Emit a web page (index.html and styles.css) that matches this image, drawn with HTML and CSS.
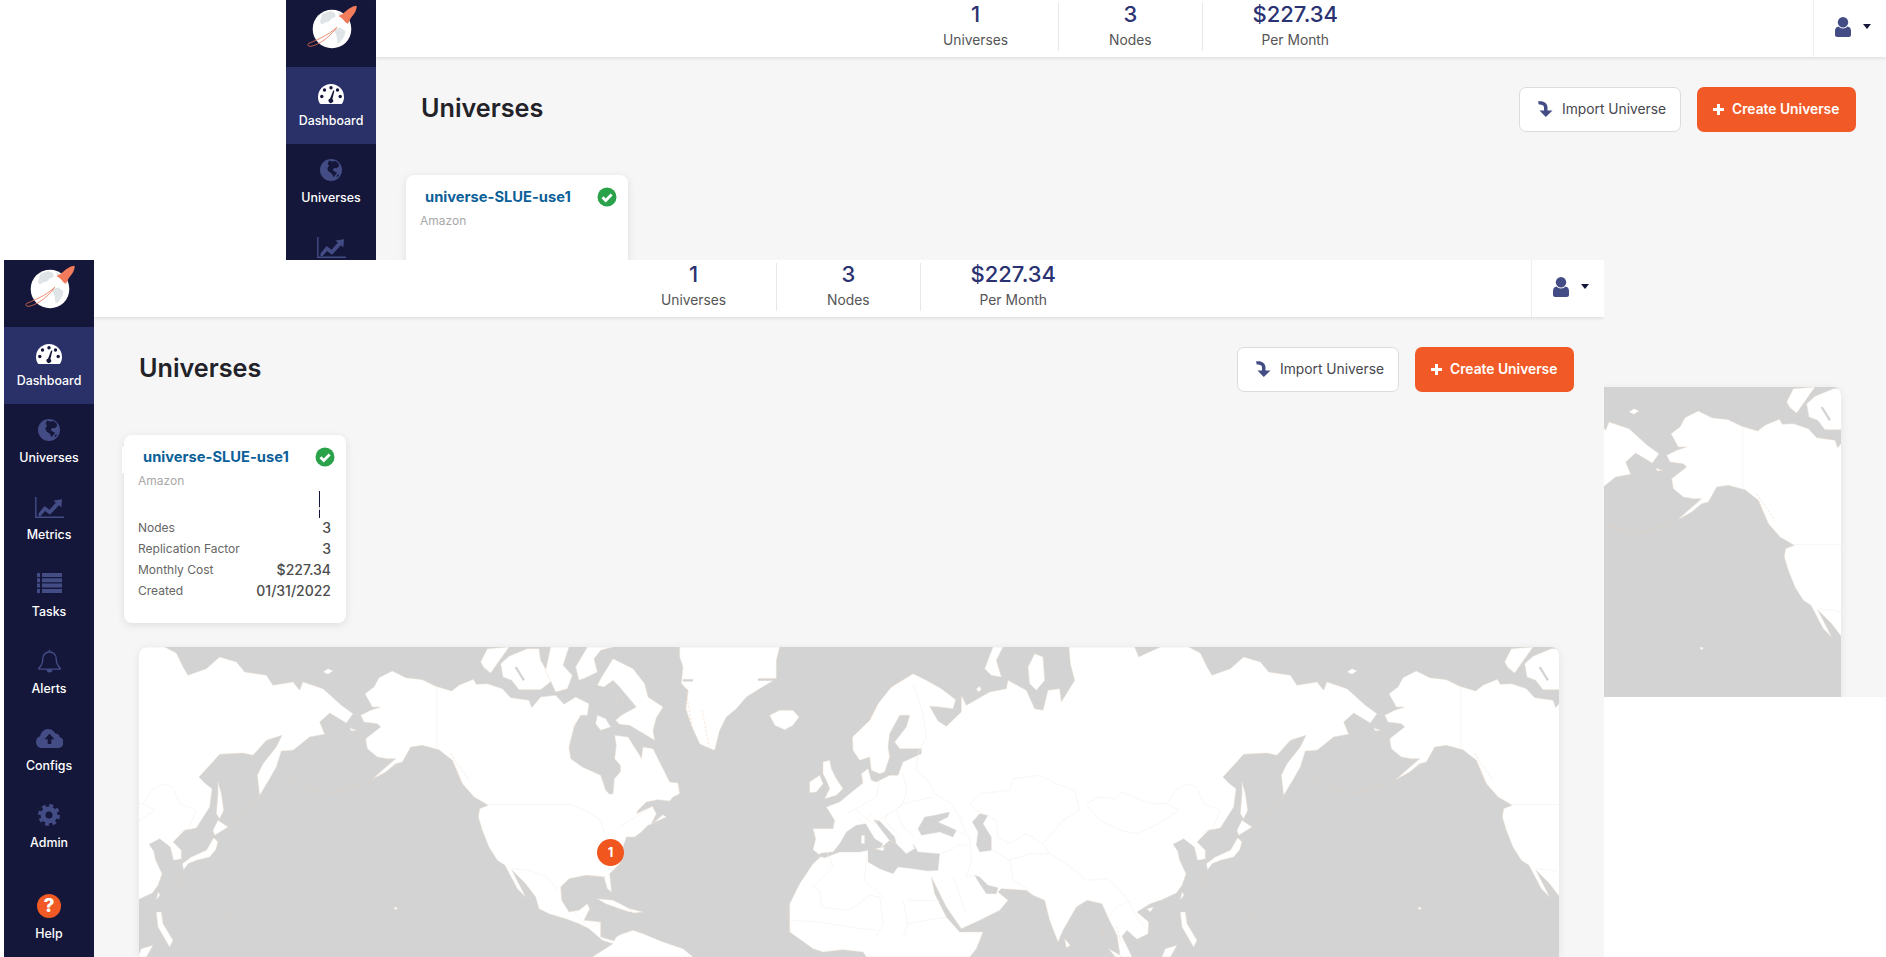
FILE: index.html
```html
<!DOCTYPE html>
<html lang="en">
<head>
<meta charset="utf-8">
<title>Universes</title>
<link rel="stylesheet" href="styles.css">
</head>
<body>
<svg class="sprite" aria-hidden="true">
  <defs>
    <g id="world">
      <!-- North America -->
      <path class="land" d="M678,140 705,120 720,92 760,72 800,92 850,98 890,118 938,132 960,115 1003,97 1012,112 1045,110 1090,125 1115,152 1170,160 1178,182 1205,150 1250,145 1275,172 1310,150 1350,170 1345,205 1325,205 1305,240 1290,300 1295,335 1330,360 1385,385 1400,430 1412,442 1422,440 1426,395 1444,375 1444,355 1427,335 1432,295 1427,265 1467,270 1502,325 1507,335 1512,300 1542,305 1572,365 1592,405 1617,408 1622,440 1602,450 1592,462 1557,458 1522,465 1497,490 1492,500 1540,478 1552,500 1537,530 1582,510 1572,503 1540,530 1527,535 1507,555 1487,570 1462,570 1452,600 1442,650 1412,680 1418,735 1405,725 1395,690 1340,685 1290,695 1265,720 1268,760 1290,795 1320,790 1345,770 1352,785 1335,820 1385,825 1385,870 1425,882 1432,870 1447,862 1482,850 1512,860 1572,885 1632,905 1662,930 1360,930 1422,890 1390,880 1350,845 1320,830 1280,815 1230,800 1200,785 1190,750 1160,710 1118,668 1160,750 1135,725 1098,655 1075,640 1050,600 1030,550 1018,510 1022,485 1048,475 1005,450 970,410 940,340 900,308 850,295 815,300 790,345 770,350 740,375 700,397 730,370 770,335 745,335 715,330 685,305 680,275 725,240 715,230 675,225 665,205 695,190 725,180 700,180z"/>
      <!-- Arctic Canada -->
      <path class="land" d="M1025,45 1045,5 1110,0 1085,35 1055,78 1035,62z"/>
      <path class="land" d="M1085,50 1110,28 1165,5 1200,5 1205,40 1225,75 1240,100 1205,128 1140,128 1118,100 1092,90z"/>
      <path class="land" d="M1235,0 1290,0 1272,55 1300,85 1285,125 1250,135 1220,70z"/>
      <path class="land" d="M1310,60 1345,0 1422,0 1385,10 1365,35 1375,75 1345,90 1320,100z"/>
      <path class="land" d="M1422,35 1452,50 1482,65 1517,110 1527,150 1572,180 1552,212 1542,250 1547,280 1522,265 1472,235 1442,232 1430,220 1447,205 1492,180 1442,120 1422,100 1395,120 1375,115 1385,95z"/>
      <path class="land" d="M1375,205 1400,215 1415,240 1385,250 1370,230z"/>
      <ellipse class="sea" cx="1442" cy="160" rx="10" ry="14"/>
      <path class="strait" d="M1130,60 1155,100M1345,130 1400,150 1425,170M1430,255 1470,240"/>
      <!-- Caribbean -->
      <path class="land" d="M1375,755 1422,760 1452,775 1490,795 1472,795 1442,785 1400,770z"/>
      <path class="land" d="M1472,785 1512,795 1482,798z"/>
      <!-- Hawaii -->
      <path class="land" d="M765,780 775,782 772,788 766,786z"/>
      <g transform="translate(1422 0)">
        <!-- Greenland, Iceland, Britain -->
        <path class="land" d="M200,0 500,0 490,40 490,95 440,125 400,150 370,185 340,210 320,250 305,310 280,300 260,290 235,235 218,185 225,130 205,110 210,60 200,30z"/>
        <path class="strait" d="M435,98 490,98M210,100 240,100"/>
        <path class="land" d="M470,205 500,190 540,190 558,210 540,235 515,248 485,235z"/>
        <path class="land" d="M630,345 650,340 655,365 670,395 690,425 670,445 635,455 650,425 640,400 630,380z"/>
        <path class="land" d="M590,405 620,385 630,410 610,435 590,437z"/>
        <!-- Afro-Eurasia -->
        <path class="land" d="M600,608 608,575 600,545 660,545 665,520 640,480 680,465 710,440 750,408 745,380 765,365 775,400 790,405 830,385 855,385 870,345 925,320 925,305 860,305 845,285 880,240 890,205 860,205 830,260 825,300 830,330 815,375 800,380 775,370 770,330 740,340 720,310 718,270 770,220 795,170 835,120 900,80 940,100 985,125 1028,158 1020,185 980,180 950,178 975,222 1000,238 1045,195 1045,145 1060,175 1095,155 1130,135 1180,125 1185,100 1240,130 1265,185 1290,190 1305,130 1340,125 1345,165 1385,100 1372,50 1368,0 1565,0 1577,30 1642,0 1727,0 1762,18 1782,60 1797,85 1852,65 1892,30 1942,45 1967,75 2032,85 2052,115 2112,105 2132,130 2142,105 2202,125 2257,175 2292,200 2272,228 2222,198 2192,225 2207,262 2162,270 2112,310 2077,312 2062,360 2042,395 2012,445 2005,385 2022,350 2062,300 2079,265 2032,280 1992,325 1962,318 1892,322 1830,390 1847,408 1869,425 1862,480 1822,543 1787,550 1752,585 1777,610 1777,635 1754,640 1744,600 1712,575 1680,592 1694,612 1700,640 1719,680 1707,715 1690,738 1647,758 1612,770 1572,795 1607,825 1605,860 1572,877 1542,850 1527,868 1557,930 1522,930 1512,865 1487,815 1467,770 1422,760 1390,780 1350,850 1335,885 1310,820 1295,760 1260,745 1240,730 1165,725 1155,735 1185,760 1160,790 1100,820 1045,845 1000,780 955,690 965,740 1000,810 1040,855 1110,855 1090,905 1070,930 760,930 750,915 690,908 630,915 600,905 565,880 530,855 530,770 560,710 600,650 625,628z"/>
        <!-- Inland seas -->
        <path class="sea" d="M612,626 625,618 660,615 680,590 700,555 730,535 758,530 785,575 810,590 800,607 830,580 850,590 880,620 905,605 900,590 915,615 980,620 975,670 945,672 900,665 855,660 840,680 800,665 765,645 765,610 740,615 680,615 635,632z"/>
        <path class="sea" d="M782,518 800,522 845,570 850,590 828,578z"/>
        <path class="sea" d="M915,545 935,510 965,505 1010,495 1005,510 975,525 1030,550 1020,570 980,555 950,560 925,565z"/>
        <path class="sea" d="M1078,525 1100,500 1125,505 1110,530 1135,570 1135,610 1100,615 1090,595 1095,555z"/>
        <path class="sea" d="M1085,685 1100,690 1125,715 1155,722 1150,740 1120,740 1100,710z"/>
        <path class="land" d="M745,565 755,565 755,590 745,590z"/>
        <path class="land" d="M787,605 815,600 810,612z"/>
        <path class="land" d="M1355,875 1372,895 1360,902z"/>
        <!-- Arctic Russia islands -->
        <path class="land" d="M1115,65 1140,0 1170,0 1150,40 1165,90 1135,85z"/>
        <path class="land" d="M1245,60 1265,20 1290,30 1295,100 1270,130 1250,110z"/>
        <path class="land" d="M1090,125 1100,118 1105,128 1095,135z"/>
      </g>
      <g transform="translate(2844 0)">
        <path class="land" d="M780,75 795,65 810,72 795,82z"/>
        <path class="land" d="M860,243 880,250 865,252z"/>
        <path class="land" d="M465,405 475,440 482,490 470,515 460,500 465,440z"/>
        <path class="land" d="M450,550 465,520 495,540 455,565z"/>
        <path class="land" d="M452,572 465,585 458,608 440,630 400,640 375,650 362,668 358,650 385,630 430,610z"/>
        <path class="land" d="M285,735 291,745 280,758z"/>
        <path class="land" d="M180,785 200,780 190,795z"/>
        <path class="land" d="M280,795 295,795 300,830 330,880 320,900 285,840z"/>
        <path class="land" d="M235,905 270,895 250,930 225,930z"/>
        <path class="land" d="M65,905 100,925 105,930 85,930z"/>
        <path class="coast" d="M670,385 730,420 790,438 840,432 900,410 960,380M590,450 540,505 490,545M360,680 340,720 300,740M495,790 490,830M43,840 50,870M90,840 100,880"/>
      </g>
      <!-- Borders -->
      <path class="border" d="M893,120V308M1048,472H1290L1340,490 1385,520 1395,555M1120,665 1170,670 1225,690 1255,730M1540,478 1490,510 1440,540M1300,790 1340,830M1360,840 1385,825"/>
      <path class="coast" d="M940,340 970,410 1005,450M935,320 990,400M1400,690 1340,685M1300,240 1325,210M1640,130 1660,240M1690,190 1710,300"/>
      <g transform="translate(1422 0)">
        <path class="border" d="M900,110 930,200 940,270 915,320 910,370 945,400 965,440 1015,470 1040,510 1060,560M800,400 790,450 740,480 700,500M730,490 780,530 830,500 870,470 960,450M870,380 880,430 870,470 850,490 870,540 905,570M825,500 815,520 860,570M735,510 750,530 775,500M1030,550 1070,570 1075,640 1060,690 1085,685M985,620 1050,590 1070,600M1070,470 1100,440 1190,430 1200,395 1280,385 1330,410 1385,430 1400,490 1350,520 1290,590 1310,620 1360,650 1420,700M1070,470 1090,490 1150,520 1155,570 1190,590 1240,560 1290,590M1190,635 1200,700 1250,730M1140,610 1190,640 1250,620 1310,620M600,720 620,730 625,780 710,790 770,745 800,750 810,830 790,870M530,820 620,825 710,840 790,850M640,610 660,660 600,720M760,625 755,700 810,750M870,760 885,830 870,870M885,760 980,760M1020,690 1060,800M885,830 1000,810"/>
        <path class="coast" d="M835,120 900,80M718,270 770,220 795,170M225,130 218,185 235,235M440,95 490,95M520,770 530,855"/>
      </g>
      <g transform="translate(2844 0)">
        <path class="border" d="M0,470 30,450 85,455 105,435 150,455 195,470 240,470 270,425 300,412 330,420 350,470 400,490 380,540 345,560M0,475 40,520 100,550 150,560 215,530 275,490 240,470M0,700 60,695 90,720 130,770 150,810 175,845M60,815 90,780 130,760"/>
      </g>
    </g>
    <symbol id="i-gauge" viewBox="0 0 26 20"><path class="i-white" d="M13 0A13 13 0 0 0 0 13c0 2.400.7 4.700 1.800 6.600.2.300.6.400 1 .4h20.400c.4 0 .8-.1 1-.4C25.300 17.700 26 15.400 26 13A13 13 0 0 0 13 0z"/><circle class="i-dark" cx="13" cy="3.700" r="1.700"/><circle class="i-dark" cx="6.500" cy="6" r="1.700"/><circle class="i-dark" cx="19.500" cy="6" r="1.700"/><circle class="i-dark" cx="3.800" cy="12.500" r="1.700"/><circle class="i-dark" cx="22.200" cy="12.500" r="1.700"/><path class="i-dark" d="M15.200 6.500l1.200.3-2 8.200a2.300 2.300 0 1 1-2.300-.5z"/></symbol>
    <symbol id="i-globe" viewBox="0 0 22 22"><circle class="i-blue" cx="11" cy="11" r="11"/><path class="i-dark" d="M9 1.500l3 1 3.500-.6 3 2.400.6 3-2.500 2-2.400-.4-1.600 2 2 1.600 2.500 1.200-2 2.600-1.500 2-1.300-2.800L11 14 8.500 12.500l-1.200-3 1.800-3-1.500-1.600zM17 16l2-1-.8 2.500-1.500.8z"/></symbol>
    <symbol id="i-chart" viewBox="0 0 29 21"><path class="i-stroke" d="M.8 0V20.200H29"/><path class="i-blue" d="M3.500 16.500l6-7.500 5 3.700 6.300-6.900-2.300-2.300L27 2.300l-.7 8.200-2.300-2.300-9 9.500-5-3.700-4.300 5H3.500z"/></symbol>
    <symbol id="i-tasks" viewBox="0 0 25 20"><path class="i-blue" d="M0 0h3v4H0zM5 0h20v4H5zM0 5.300h3v4H0zM5 5.300h20v4H5zM0 10.600h3v4H0zM5 10.600h20v4H5zM0 15.900h3v4H0zM5 15.900h20v4H5z"/></symbol>
    <symbol id="i-bell" viewBox="0 0 23 24"><path class="i-stroke" d="M11.500 3c4.500 0 6.800 3.300 6.800 7.500 0 5 2.100 7 3.900 8.800.3.400 0 .8-.4.800H1.200c-.4 0-.7-.4-.4-.8 1.800-1.800 3.900-3.800 3.900-8.800C4.700 6.300 7 3 11.500 3zM11.500 3V.8"/><path class="i-blue" d="M8.500 20.500h6a3 3 0 0 1-6 0z"/></symbol>
    <symbol id="i-cloud" viewBox="0 0 27 19"><path class="i-blue" d="M6 19a6 6 0 0 1-1.800-11.700A8 8 0 0 1 12 0c3.300 0 6 1.800 7.200 4.600A5.500 5.500 0 0 1 24 8.200a5.600 5.600 0 0 1-2.500 10.800z"/><path class="i-dark" d="M13.500 4.700l5 5.500H15.300V15h-3.600v-4.800H8.500z"/></symbol>
    <symbol id="i-gear" viewBox="0 0 22 22"><circle class="i-gear-ring" cx="11" cy="11" r="6"/><circle class="i-gear-teeth" cx="11" cy="11" r="9.300"/></symbol>
    <symbol id="i-user" viewBox="0 0 16 20"><circle class="i-blue" cx="8" cy="5.200" r="5.200"/><path class="i-blue" d="M3.500 9.600c1 1.300 2.700 1.900 4.500 1.900s3.500-.6 4.500-1.900c2 .4 3.500 1.800 3.500 4.300v3.800c0 1.300-1 2.300-2.300 2.300H2.300C1 20 0 19 0 17.700v-3.800c0-2.500 1.500-3.900 3.500-4.300z"/></symbol>
    <symbol id="i-import" viewBox="0 0 15 16"><path class="i-blue" d="M0 .5c4-.7 8.800.5 9.500 5.500v3.500H14.500L7.800 16 1.500 9.500H6V6.500C6 4 3.500 3.300.8 3.500z"/></symbol>
    <symbol id="i-check" viewBox="0 0 20 20"><circle class="i-green" cx="10" cy="10" r="9.500"/><path class="i-check" d="M5.500 10.200l3.200 3.200 5.900-6"/></symbol>
    <symbol id="i-logo" viewBox="0 0 60 46">
      <circle class="l-globe" cx="27" cy="24" r="19.300"/>
      <path class="l-land" d="M17 9l8-3 5 2 .5 4-4 1.500-2.500 3-4 1-3 2-2-2 1-4.500zM30 24l5-1.500 5.500 3.500-1 5-4.500 6.500-2.500.5-1-7.500-2-4zM33 7l3 1.500.5 2-3-1z"/>
      <path class="l-rocket" d="M33.500 11c2.500-1.500 4.500-2 7-4.500 3-2.800 6-5 10.500-5.800l.8.800c-.5 4-2 7-5 10.300-2 2.200-2.300 5-3.800 7-1.500-.5-2.500-1.300-4.500-3.800s-3.500-3-5-4z"/>
      <path class="l-ring" d="M32 22C23 31 8 36.500 4 38.300c-2 1-1.300 3 1 3 5 0 17-6 26-17.800"/>
    </symbol>
  </defs>
</svg>

<div class="desktop">
  <section class="window window-back">
    <nav class="sidebar">
      <div class="logo"><svg class="logo-svg"><use href="#i-logo"/></svg></div>
      <a class="nav-item active"><span class="nav-icon"><svg class="ic ic-gauge"><use href="#i-gauge"/></svg></span><span class="nav-label">Dashboard</span></a>
      <a class="nav-item"><span class="nav-icon"><svg class="ic ic-globe"><use href="#i-globe"/></svg></span><span class="nav-label">Universes</span></a>
      <a class="nav-item"><span class="nav-icon"><svg class="ic ic-chart"><use href="#i-chart"/></svg></span><span class="nav-label">Metrics</span></a>
    </nav>
    <div class="main">
      <header class="topbar">
        <div class="stats">
          <div class="stat"><div class="stat-num">1</div><div class="stat-label">Universes</div></div>
          <div class="stat"><div class="stat-num">3</div><div class="stat-label">Nodes</div></div>
          <div class="stat"><div class="stat-num">$227.34</div><div class="stat-label">Per Month</div></div>
        </div>
        <div class="profile"><svg class="ic ic-user"><use href="#i-user"/></svg><span class="caret"></span></div>
      </header>
      <div class="content">
        <div class="title-row">
          <h1 class="title">Universes</h1>
          <div class="actions">
            <button class="btn btn-import"><svg class="ic ic-import"><use href="#i-import"/></svg>Import Universe</button>
            <button class="btn btn-create"><span class="plus"></span>Create Universe</button>
          </div>
        </div>
        <div class="card">
          <div class="card-head"><a class="card-title">universe-SLUE-use1</a><svg class="ic ic-check"><use href="#i-check"/></svg></div>
          <div class="card-sub">Amazon</div>
        </div>
        <div class="map">
          <svg class="map-svg" viewBox="0 0 4260 930"><use href="#world"/><use href="#world" x="3072"/><use href="#world" x="-3072"/></svg>
        </div>
      </div>
    </div>
  </section>

  <section class="window window-front">
    <nav class="sidebar">
      <div class="logo"><svg class="logo-svg"><use href="#i-logo"/></svg></div>
      <a class="nav-item active"><span class="nav-icon"><svg class="ic ic-gauge"><use href="#i-gauge"/></svg></span><span class="nav-label">Dashboard</span></a>
      <a class="nav-item"><span class="nav-icon"><svg class="ic ic-globe"><use href="#i-globe"/></svg></span><span class="nav-label">Universes</span></a>
      <a class="nav-item"><span class="nav-icon"><svg class="ic ic-chart"><use href="#i-chart"/></svg></span><span class="nav-label">Metrics</span></a>
      <a class="nav-item"><span class="nav-icon"><svg class="ic ic-tasks"><use href="#i-tasks"/></svg></span><span class="nav-label">Tasks</span></a>
      <a class="nav-item"><span class="nav-icon"><svg class="ic ic-bell"><use href="#i-bell"/></svg></span><span class="nav-label">Alerts</span></a>
      <a class="nav-item"><span class="nav-icon"><svg class="ic ic-cloud"><use href="#i-cloud"/></svg></span><span class="nav-label">Configs</span></a>
      <a class="nav-item"><span class="nav-icon"><svg class="ic ic-gear"><use href="#i-gear"/></svg></span><span class="nav-label">Admin</span></a>
      <a class="nav-item nav-help"><span class="nav-icon"><span class="help-icon">?</span></span><span class="nav-label">Help</span></a>
    </nav>
    <div class="main">
      <header class="topbar">
        <div class="stats">
          <div class="stat"><div class="stat-num">1</div><div class="stat-label">Universes</div></div>
          <div class="stat"><div class="stat-num">3</div><div class="stat-label">Nodes</div></div>
          <div class="stat"><div class="stat-num">$227.34</div><div class="stat-label">Per Month</div></div>
        </div>
        <div class="profile"><svg class="ic ic-user"><use href="#i-user"/></svg><span class="caret"></span></div>
      </header>
      <div class="content">
        <div class="title-row">
          <h1 class="title">Universes</h1>
          <div class="actions">
            <button class="btn btn-import"><svg class="ic ic-import"><use href="#i-import"/></svg>Import Universe</button>
            <button class="btn btn-create"><span class="plus"></span>Create Universe</button>
          </div>
        </div>
        <div class="card">
          <span class="card-notch"></span>
          <span class="card-tick"></span>
          <div class="card-head"><a class="card-title">universe-SLUE-use1</a><svg class="ic ic-check"><use href="#i-check"/></svg></div>
          <div class="card-sub">Amazon</div>
          <dl class="card-rows">
            <div class="row"><dt>Nodes</dt><dd>3</dd></div>
            <div class="row"><dt>Replication Factor</dt><dd>3</dd></div>
            <div class="row"><dt>Monthly Cost</dt><dd>$227.34</dd></div>
            <div class="row"><dt>Created</dt><dd>01/31/2022</dd></div>
          </dl>
        </div>
        <div class="map">
          <svg class="map-svg" viewBox="0 0 4260 930"><use href="#world"/><use href="#world" x="3072"/><use href="#world" x="-3072"/></svg>
          <span class="marker">1</span>
        </div>
      </div>
    </div>
  </section>
</div>
</body>
</html>
```

FILE: styles.css
```css
* { box-sizing: border-box; }
html, body { margin: 0; padding: 0; background: #fff; }
body { font-family: Inter, "Noto Sans", sans-serif; color: #222; }
.sprite { position: absolute; width: 0; height: 0; }

.desktop { position: relative; width: 1886px; height: 957px; overflow: hidden; background: #fff; }
.window { position: absolute; width: 1600px; height: 697px; display: flex; background: #f6f6f6; overflow: hidden; }
.window-back { left: 286px; top: 0; }
.window-front { left: 4px; top: 260px; }

/* Sidebar */
.sidebar { width: 90px; flex: none; background: #15173a; display: flex; flex-direction: column; }
.logo { height: 67px; flex: none; display: flex; align-items: flex-start; padding: 5px 0 0 19px; }
.logo-svg { width: 60px; height: 46px; }
.nav-item { height: 77px; flex: none; display: flex; flex-direction: column; align-items: center; color: #fff; }
.nav-item.active { background: #2a3168; }
.nav-help { margin-top: auto; }
.nav-icon { height: 24px; margin-top: 14px; display: flex; align-items: center; justify-content: center; }
.nav-label { margin-top: 8px; font-size: 12.4px; line-height: 16px; font-weight: 500; color: #fff; }
.ic { display: block; flex: none; }
.ic-gauge { width: 26px; height: 20px; margin-top: 2px; }
.ic-globe { width: 22px; height: 22px; }
.ic-chart { width: 29px; height: 21px; }
.ic-tasks { width: 25px; height: 20px; margin-bottom: 2px; }
.ic-bell { width: 23px; height: 24px; }
.ic-cloud { width: 27px; height: 19px; }
.ic-gear { width: 22px; height: 22px; }
.ic-user { width: 16px; height: 20px; }
.ic-import { width: 15px; height: 16px; }
.ic-check { width: 20px; height: 20px; }
.help-icon { width: 24px; height: 24px; border-radius: 50%; background: #f15a24; color: #fff; font-size: 19px; font-weight: 800; line-height: 24px; text-align: center; }

.i-white { fill: #fff; }
.i-dark { fill: #15173a; }
.i-blue { fill: #434c85; }
.i-stroke { fill: none; stroke: #434c85; stroke-width: 1.4; }
.i-green { fill: #2aa24a; }
.i-check { fill: none; stroke: #fff; stroke-width: 2.8; }
.i-gear-ring { fill: none; stroke: #434c85; stroke-width: 5; }
.i-gear-teeth { fill: none; stroke: #434c85; stroke-width: 3.4; stroke-dasharray: 3.8 3.5; }
.l-globe { fill: #fff; }
.l-land { fill: #dfe5e7; }
.l-rocket { fill: #f27b5c; }
.l-ring { fill: none; stroke: #e8704f; stroke-width: .8; }

/* Main */
.main { flex: 1; min-width: 0; display: flex; flex-direction: column; }
.topbar { height: 57px; flex: none; background: #fff; box-shadow: 0 1px 4px rgba(0, 0, 0, .12); display: flex; padding-left: 517px; position: relative; z-index: 1; }
.stats { display: flex; padding-top: 3px; height: 51px; }
.stat { padding: 0 50px; text-align: center; border-right: 1px solid #e8e8e8; height: 48px; }
.stat:last-child { border-right: 0; }
.stat-num { font-size: 22px; line-height: 22px; font-weight: 500; color: #2b3272; }
.stat-label { margin-top: 6px; font-size: 13.8px; line-height: 18px; color: #555; white-space: nowrap; }
.profile { margin-left: auto; width: 73px; border-left: 1px solid #eee; display: flex; align-items: flex-start; padding: 17px 0 0 21px; position: relative; }
.caret { margin: 7px 0 0 12px; border-left: 4px solid transparent; border-right: 4px solid transparent; border-top: 5px solid #15173a; }

.content { flex: 1; position: relative; }
.title-row { display: flex; justify-content: space-between; align-items: center; height: 45px; margin: 30px 30px 0 45px; }
.title { margin: 0 0 4px; font-size: 25.2px; line-height: 30px; font-weight: 600; color: #222228; }
.actions { display: flex; gap: 16px; }
.btn { height: 45px; border-radius: 7px; font-family: inherit; font-size: 13.8px; display: flex; align-items: center; padding: 0 0 1px; }
.btn-import { width: 162px; background: #fff; border: 1px solid #dcdcdc; color: #46464e; padding-left: 18px; gap: 9px; }
.btn-create { width: 159px; background: #f15a26; border: 0; color: #fff; font-weight: 600; padding-left: 16px; gap: 8px; }
.plus { position: relative; width: 11px; height: 11px; }
.plus::before, .plus::after { content: ""; position: absolute; background: #fff; }
.plus::before { left: 0; right: 0; top: 4px; height: 3px; }
.plus::after { top: 0; bottom: 0; left: 4px; width: 3px; }

/* Card */
.card { position: relative; width: 222px; height: 188px; margin: 43px 0 0 30px; padding: 12px 15px 0 14px; background: #fff; border-radius: 8px; box-shadow: 0 2px 8px rgba(0, 0, 0, .1); }
.card-notch { position: absolute; left: -2px; top: 12px; width: 10px; height: 26px; background: #fff; }
.card-tick { position: absolute; left: 195px; top: 56px; width: 1px; height: 27px; background: linear-gradient(#15173a 0 60%, #ccc 60% 70%, #15173a 70%); }
.card-head { position: relative; display: flex; align-items: center; justify-content: space-between; height: 20px; padding-left: 5px; margin-right: -4px; }
.card-title { font-size: 14.7px; line-height: 20px; font-weight: 700; color: #0b5f99; white-space: nowrap; }
.card-sub { margin-top: 5px; font-size: 12px; line-height: 18px; color: #a8a8a8; }
.card-rows { margin: 27px 0 0; }
.row { display: flex; justify-content: space-between; align-items: center; height: 21px; }
.row dt { font-size: 12px; color: #666; }
.row dd { margin: 0; font-size: 14px; font-weight: 500; color: #4c4c4c; }

/* Map */
.map { position: relative; width: 1420px; height: 310px; margin: 24px 0 0 45px; background: #d3d3d3; border-radius: 8px 8px 0 0; overflow: hidden; box-shadow: 0 2px 10px rgba(0, 0, 0, .08); }
.map-svg { display: block; width: 1420px; height: 310px; }
.land { fill: #fff; stroke: #eedfd2; stroke-width: 1.4; stroke-linejoin: round; }
.sea { fill: #d3d3d3; stroke: #e9dccf; stroke-width: 1; }
.strait { fill: none; stroke: #d3d3d3; stroke-width: 7; }
.border { fill: none; stroke: #f3ece6; stroke-width: 1.5; }
.coast { fill: none; stroke: #ecd2bb; stroke-width: 1.6; stroke-dasharray: 7 5; }
.marker { position: absolute; left: 458px; top: 192px; width: 27px; height: 27px; border-radius: 50%; background: #f1561f; color: #fff; font-size: 13px; font-weight: 700; line-height: 27px; text-align: center; }
```
